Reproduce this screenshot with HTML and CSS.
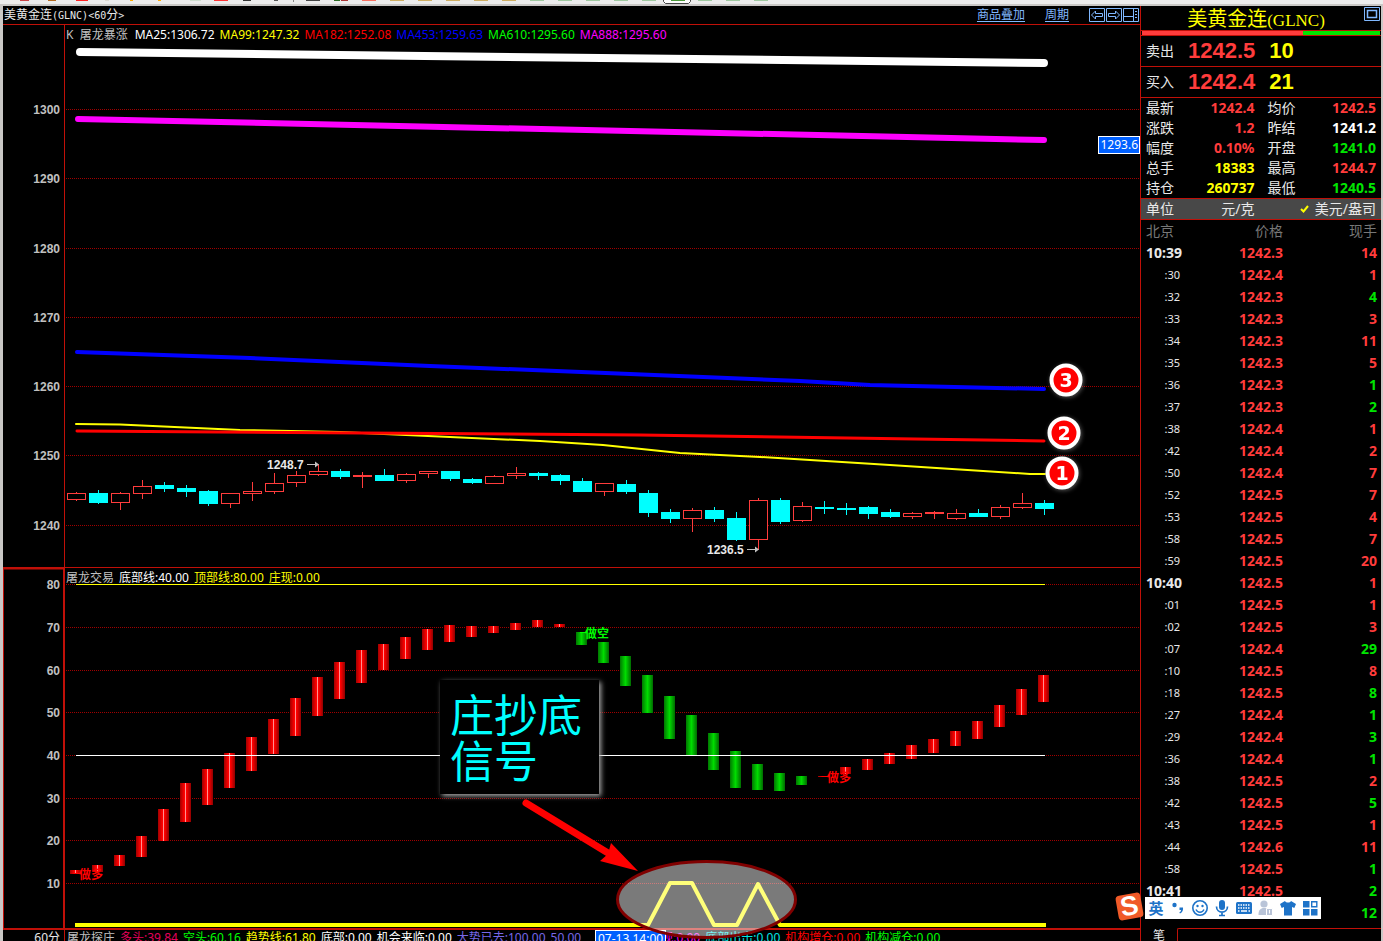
FILE: index.html
```html
<!DOCTYPE html>
<html lang="zh-CN">
<head>
<meta charset="utf-8">
<title>美黄金连(GLNC)</title>
<link rel="stylesheet" href="styles.css">
</head>
<body>
<div class="app">
  <div class="toolbar" aria-hidden="true">
    <svg class="toolbar-icons" width="800" height="4">
      <g id="toolbar-marks"></g>
      <path d="M663.500 0v1.500l2 2h23l2-2V0" fill="#fff" stroke="#444"/>
      <path d="M671 0h14v1h-14z" fill="#4d9a3c"/>
      <path d="M293.500 0v2" stroke="#888"/>
    </svg>
  </div>
  <div class="workspace">
    <main class="charts">
      <header class="title-row">
        <h1 class="chart-title">美黄金连<span class="mono">(GLNC)&lt;60</span>分<span class="mono">&gt;</span></h1>
        <nav class="chart-nav">
          <a href="#overlay">商品叠加</a>
          <a href="#period">周期</a>
          <span class="window-buttons">
            <button type="button" class="win-btn" aria-label="向左"><svg width="16" height="14"><path d="M.5.500h15v13H.5zM2.500 7l4-4v2.500h7v3h-7V11z"/></svg></button>
            <button type="button" class="win-btn" aria-label="向右"><svg width="16" height="14"><path d="M.5.500h15v13H.5zM13.500 7l-4-4v2.500h-7v3h7V11z"/></svg></button>
            <button type="button" class="win-btn" aria-label="布局"><svg width="16" height="14"><path d="M.5.500h15v13H.5zM10.500.500v13M.5 8.500h10M12 3.500h2M12 6.500h2M12 9.500h2"/></svg></button>
          </span>
        </nav>
      </header>

      <section class="panel price-panel">
        <svg class="plot" id="price-plot" viewBox="3 25 1137 542" preserveAspectRatio="none"></svg>
        <div class="legend">
          <span class="grey name">K&nbsp; 屠龙暴涨</span>
          <span class="white">MA25:1306.72</span>
          <span class="yellow">MA99:1247.32</span>
          <span class="red">MA182:1252.08</span>
          <span class="blue">MA453:1259.63</span>
          <span class="lime">MA610:1295.60</span>
          <span class="magenta">MA888:1295.60</span>
        </div>
        <output class="price-tag">1293.6</output>
      </section>

      <section class="panel signal-panel">
        <svg class="plot" id="signal-plot" viewBox="3 568 1137 360" preserveAspectRatio="none">
          <defs>
            <linearGradient id="bar-red"><stop offset="0" stop-color="#a00000"/><stop offset=".4" stop-color="#ff0000"/><stop offset=".6" stop-color="#ff0000"/><stop offset="1" stop-color="#900000"/></linearGradient>
            <linearGradient id="bar-green"><stop offset="0" stop-color="#007800"/><stop offset=".5" stop-color="#00dc00"/><stop offset="1" stop-color="#006c00"/></linearGradient>
          </defs>
        </svg>
        <div class="legend">
          <span class="grey">屠龙交易</span>
          <span class="white">底部线:40.00</span>
          <span class="yellow">顶部线:80.00</span>
          <span class="yellow">庄现:0.00</span>
        </div>
      </section>

      <section class="strip">
        <span class="strip-period">60分</span>
        <div class="strip-legend">
          <span class="grey">屠龙探庄</span>
          <span class="crimson">多头:39.84</span>
          <span class="lime">空头:60.16</span>
          <span class="yellow">趋势线:61.80</span>
          <span class="white">底部:0.00</span>
          <span class="white">机会来临:0.00</span>
          <span class="violet">大势已去:100.00</span>
          <span class="violet">50.00</span>
          <span class="magenta after-tag">现:0.00</span>
          <span class="cyan">底部出击:0.00</span>
          <span class="red">机构增仓:0.00</span>
          <span class="lime">机构减仓:0.00</span>
        </div>
        <output class="date-tag">07-13 14:00</output>
      </section>

      <p class="callout">庄抄底<br>信号</p>
      <svg class="annotations" viewBox="3 6 1137 935" preserveAspectRatio="none">
        <defs>
          <filter id="soft" x="-30%" y="-30%" width="160%" height="160%"><feDropShadow dx="1" dy="1" stdDeviation="2" flood-color="#aaa" flood-opacity=".5"/></filter>
        </defs>
        <ellipse cx="706.500" cy="899.500" rx="89" ry="38" fill="#fff" fill-opacity=".48" stroke="#800000" stroke-width="3"/>
        <path d="M526 803L608 853" stroke="#f00" stroke-width="7" stroke-linecap="round"/>
        <path d="M638 871L600 861L608 854L611 843Z" fill="#f00"/>
        <g class="badge" filter="url(#soft)">
          <circle cx="1066" cy="380" r="14.500"/><text x="1066" y="387">3</text>
          <circle cx="1064" cy="433" r="14.500"/><text x="1064" y="440">2</text>
          <circle cx="1062" cy="473" r="14.500"/><text x="1062" y="480">1</text>
        </g>
      </svg>
    </main>

    <aside class="quote">
      <header class="quote-head">
        <h2 class="quote-name">美黄金连<span class="code">(GLNC)</span></h2>
        <button type="button" class="win-btn quote-max" aria-label="最大化"><svg width="16" height="14"><path d="M.5.500h15v13H.5z"/><path d="M3.500 3.500h9v7h-9z" stroke-width="1.500"/></svg></button>
      </header>
      <div class="ratio"><span class="ratio-sell"></span><span class="ratio-buy"></span></div>
      <div class="order"><span class="label">卖出</span><strong class="up">1242.5</strong><strong class="yellow">10</strong></div>
      <div class="order"><span class="label">买入</span><strong class="up">1242.4</strong><strong class="yellow">21</strong></div>
      <div class="stats">
        <div class="stat"><span>最新</span><b class="up">1242.4</b></div><div class="stat"><span>均价</span><b class="up">1242.5</b></div>
        <div class="stat"><span>涨跌</span><b class="up">1.2</b></div><div class="stat"><span>昨结</span><b class="white">1241.2</b></div>
        <div class="stat"><span>幅度</span><b class="up">0.10%</b></div><div class="stat"><span>开盘</span><b class="down">1241.0</b></div>
        <div class="stat"><span>总手</span><b class="yellow">18383</b></div><div class="stat"><span>最高</span><b class="up">1244.7</b></div>
        <div class="stat"><span>持仓</span><b class="yellow">260737</b></div><div class="stat"><span>最低</span><b class="down">1240.5</b></div>
      </div>
      <div class="units">
        <div class="stat"><span>单位</span><button type="button" class="unit-btn">元/克</button></div>
        <button type="button" class="unit-btn selected"><svg width="9" height="8"><path d="M1 4l2.500 2.500L8 1" fill="none" stroke="#ff0" stroke-width="2"/></svg>美元/盎司</button>
      </div>
      <table class="tape">
        <colgroup><col class="col-time"><col class="col-price"><col></colgroup>
        <thead><tr><th scope="col">北京</th><th scope="col">价格</th><th scope="col">现手</th></tr></thead>
        <tbody id="tape-body"></tbody>
      </table>
      <div class="quote-tabs"><button type="button" class="tab">笔</button><div class="tab-rest"></div></div>
    </aside>
  </div>
</div>

<div class="ime">
  <div class="ime-logo"><span>S</span></div>
  <button type="button" class="ime-lang">英</button>
  <button type="button" aria-label="标点"><svg width="18" height="18"><circle cx="5.500" cy="6" r="2.200"/><path d="M10.500 8.500h3.500c.4 2.500-.5 5-3 6l-.7-1c1.200-.6 1.700-1.500 1.700-2.500h-1.500z"/></svg></button>
  <button type="button" aria-label="表情"><svg width="18" height="18"><circle cx="9" cy="9" r="7.200" fill="none" stroke="#1e73c8" stroke-width="1.600"/><circle cx="6.500" cy="7" r="1.200"/><circle cx="11.500" cy="7" r="1.200"/><path d="M5 10.500c1.500 3.500 6.500 3.500 8 0" fill="none" stroke="#1e73c8" stroke-width="1.500"/></svg></button>
  <button type="button" aria-label="语音"><svg width="18" height="18"><rect x="6" y="1" width="6" height="10" rx="3"/><path d="M3.500 7.500c0 7.500 11 7.500 11 0M9 13v3M6 16.500h6" fill="none" stroke="#1e73c8" stroke-width="1.700"/></svg></button>
  <button type="button" aria-label="键盘"><svg width="18" height="18"><rect x="1" y="3" width="16" height="12" rx="1.500"/><path d="M3 6h12M3 9h12" stroke="#fff" stroke-width="1.500" stroke-dasharray="1.500 1"/><path d="M3 12h1.500M6 12h6M13.500 12H15" stroke="#fff" stroke-width="1.500"/></svg></button>
  <button type="button" aria-label="账户"><svg width="18" height="18"><g fill="#b9c4d8"><circle cx="7" cy="5" r="3.600"/><path d="M1.500 16c0-5 2-7 5.500-7s4 1 4.500 2H9v5z"/><path d="M9.500 9.500h6v7h-6z" stroke="#fff"/></g><path d="M12.500 11v3.500" stroke="#fff"/></svg></button>
  <button type="button" aria-label="皮肤"><svg width="18" height="18"><path d="M6 2c1 2 5 2 6 0l5 3-1.700 4-2.300-1v8.500H5V8L2.700 9 1 5z"/></svg></button>
  <button type="button" aria-label="工具箱"><svg width="18" height="18"><path d="M2 2h6.500v6.500H2zM2 10h6.500v6.500H2zM10 10h6.500v6.500H10z"/><path d="M10.700 2.700h5.100v5.100h-5.100z" fill="none" stroke="#1e73c8" stroke-width="1.400"/></svg></button>
</div>
<script src="app.js"></script>
</body>
</html>
```
FILE: styles.css
```css
* { box-sizing: border-box; }

body {
  margin: 0;
  background: #000;
  color: #e8e8e8;
  font: 12px/16px "Noto Sans", "Noto Sans CJK SC", sans-serif;
}

h1, h2, p { margin: 0; font-weight: 400; }

button {
  padding: 0;
  border: 0;
  background: none;
  color: inherit;
  font: inherit;
}

.white { color: #fff; }
.grey { color: #c0c0c0; }
.yellow { color: #ff0; }
.red { color: #f00; }
.blue { color: #00f; }
.lime { color: #0f0; }
.magenta { color: #f0f; }
.cyan { color: #00e6e6; }
.crimson { color: #e6005c; }
.violet { color: #7868e8; }
.up { color: #ff3c3c; }
.down { color: #00e600; }

.app {
  display: flex;
  flex-direction: column;
  height: 100vh;
  overflow: hidden;
}

.toolbar {
  flex: none;
  height: 6px;
  background: #ececec;
  border-bottom: 2px solid #cac8c6;
}
.toolbar-icons { display: block; }

.workspace {
  flex: 1;
  min-height: 0;
  display: grid;
  grid-template-columns: minmax(0, 1fr) 241px;
  border-left: 3px solid #cac8c6;
  border-right: 2px solid #cac8c6;
}

/* Charts */
.charts {
  position: relative;
  display: grid;
  grid-template-rows: 19px minmax(0, 543fr) minmax(0, 362fr) 11px;
  min-width: 0;
  overflow: hidden;
}

.title-row {
  display: flex;
  justify-content: space-between;
  align-items: center;
  border-bottom: 1px solid #c01008;
}
.chart-title { padding-left: 1px; font-size: 12px; }
.mono { font: 10px "DejaVu Sans Mono", monospace; }
.chart-nav { display: flex; align-items: center; gap: 20px; }
.chart-nav a { color: #80b8ff; text-underline-offset: 2px; }
.window-buttons { display: flex; gap: 1px; padding-right: 1px; }
.win-btn { display: block; height: 14px; }
.win-btn svg { display: block; fill: none; stroke: #80b8ff; }

.panel { position: relative; min-height: 0; }
.price-panel { border-bottom: 1px solid #c01008; }
.signal-panel { border-bottom: 2px solid #c01008; }
.plot { display: block; width: 100%; height: 100%; }

.legend {
  position: absolute;
  top: 2px;
  left: 63px;
  display: flex;
  gap: 5px;
  white-space: nowrap;
}
.legend .name { margin-right: 2px; }

.price-tag {
  position: absolute;
  top: 111px;
  right: 0;
  padding: 0 1px;
  border: 1px solid #fff;
  background: #0060ff;
  color: #fff;
}

.grid-line { stroke: #a00000; stroke-dasharray: 1 1; }
.frame { stroke: #c01008; }
.axis-label {
  fill: #c0c0c0;
  font: bold 12px "Liberation Sans", sans-serif;
  text-anchor: end;
}
.point-label { fill: #e8e8e8; font: bold 12px "Liberation Sans", sans-serif; }
.signal-label { font: bold 12px "Noto Sans CJK SC", sans-serif; }
.candle-up { fill: #000; stroke: #ff3c3c; }
.candle-down { fill: #0ff; stroke: #0ff; }
.series { fill: none; stroke-linejoin: round; }

.strip {
  position: relative;
  display: grid;
  grid-template-columns: 62px 1fr;
  min-height: 0;
  white-space: nowrap;
}
.strip-period { padding-right: 4px; border-right: 1px solid #c01008; text-align: right; }
.strip-legend { display: flex; gap: 5px; padding-left: 2px; }
.after-tag { margin-left: 75px; }
.date-tag {
  position: absolute;
  top: 0;
  left: 592px;
  padding: 0 2px;
  border: 1px solid #fff;
  background: #0060ff;
  color: #fff;
}

.callout {
  position: absolute;
  top: 674px;
  left: 437px;
  padding: 10px 17px 12px 10px;
  background: #000;
  box-shadow: 2px 2px 5px #aaa;
  color: #0ff;
  font: 44px/46px "Noto Sans CJK SC", sans-serif;
}
.annotations {
  position: absolute;
  inset: 0;
  width: 100%;
  height: 100%;
  pointer-events: none;
}
.badge circle { fill: #f00; stroke: #fff; stroke-width: 4px; }
.badge text {
  fill: #fff;
  font: bold 19px "DejaVu Sans", sans-serif;
  text-anchor: middle;
}

/* Quote column */
.quote {
  display: flex;
  flex-direction: column;
  min-height: 0;
  overflow: hidden;
  border-left: 1px solid #c01008;
  font-size: 14px;
  line-height: 20px;
}
.quote-head {
  position: relative;
  display: flex;
  flex: none;
  justify-content: center;
  height: 25px;
  padding-right: 10px;
  border-bottom: 1px solid #c01008;
}
.quote-name { color: #ff0; font: 20px/24px "Noto Sans CJK SC", sans-serif; }
.code { font: 17px "Liberation Serif", serif; }
.quote-max { position: absolute; top: 1px; right: 1px; }

.ratio { display: flex; flex: none; height: 5px; padding: 0 1px; border-bottom: 1px solid #c01008; }
.ratio-sell { flex: 161; background: #ff3c3c; }
.ratio-buy { flex: 77; background: #00e600; }

.order {
  display: flex;
  flex: none;
  align-items: center;
  gap: 14px;
  height: 31px;
  padding-left: 5px;
  border-bottom: 1px solid #c01008;
}
.order strong { font: bold 22px "Liberation Sans", sans-serif; }

.stats, .units {
  display: grid;
  flex: none;
  grid-template-columns: 1fr 1fr;
  column-gap: 13px;
  padding: 0 5px;
  border-bottom: 1px solid #c01008;
}
.stat { display: flex; justify-content: space-between; }
.units { background: #484848; }
.unit-btn { display: block; }
.unit-btn.selected { display: flex; align-items: center; justify-content: flex-end; gap: 6px; white-space: nowrap; }

.tape {
  flex: none;
  width: 100%;
  border-collapse: collapse;
  table-layout: fixed;
  text-align: right;
}
.col-time { width: 41px; }
.col-price { width: 101px; }
.tape th, .tape td { height: 22px; padding: 0; white-space: nowrap; }
.tape th { color: #777; font-weight: 400; }
.tape td { font-weight: 700; }
.tape th:last-child, .tape td:last-child { padding-right: 4px; }
.tape th:first-child, .tape td.hour { padding-left: 5px; text-align: left; }
.tape td.second { padding-right: 2px; font-size: 11px; font-weight: 400; }

.quote-tabs { display: flex; flex: none; padding-top: 4px; line-height: 16px; }
.tab { width: 36px; font-size: 12px; }
.tab-rest {
  flex: 1;
  height: 16px;
  border: 1px solid #c01008;
  border-width: 1px 0 0 1px;
  border-top-left-radius: 2px;
}

/* Input method bar floats over the window */
.ime {
  position: absolute;
  right: 62px;
  bottom: 22px;
  display: flex;
  height: 22px;
  background: #fff;
}
.ime button {
  display: grid;
  place-items: center;
  width: 22px;
  color: #1e73c8;
  fill: #1e73c8;
}
.ime .ime-lang { font: bold 15px/22px "Noto Sans CJK SC", sans-serif; }
.ime-logo {
  position: absolute;
  right: 179px;
  bottom: 0;
  display: grid;
  place-items: center;
  width: 25px;
  height: 25px;
  border-radius: 4px;
  background: #f05a28;
  color: #fff;
  font: bold 27px/25px "Liberation Sans", sans-serif;
  transform: rotate(-10deg);
}
```
FILE: app.js
```js
const SVG = 'http://www.w3.org/2000/svg';
const STEP = 22;

function add(parent, tag, attrs, text) {
  const node = document.createElementNS(SVG, tag);
  for (const key in attrs) node.setAttribute(key, attrs[key]);
  if (text) node.textContent = text;
  parent.appendChild(node);
  return node;
}

function gridLines(svg, rows) {
  for (const [y, label] of rows) {
    add(svg, 'path', { d: `M66 ${y + 0.5}H1140`, class: 'grid-line' });
    add(svg, 'text', { x: 60, y: y + 5, class: 'axis-label' }, label);
  }
}

function series(svg, points, color, width, cap) {
  add(svg, 'polyline', { points, class: 'series', stroke: color, 'stroke-width': width, 'stroke-linecap': cap || 'round' });
}

/* Price panel */
const price = document.getElementById('price-plot');
add(price, 'path', { d: 'M64.5 25V567', class: 'frame' });
gridLines(price, [[109, '1300'], [178, '1290'], [248, '1280'], [317, '1270'], [386, '1260'], [455, '1250'], [525, '1240']]);

/* direction, high, body top, body bottom, low */
const candles = [
  ['u', 492, 493, 500, 501], ['d', 490, 493, 503, 504], ['u', 492, 493, 503, 510], ['u', 480, 486, 494, 499],
  ['d', 482, 485, 489, 492], ['d', 485, 488, 492, 497], ['d', 490, 491, 504, 506], ['u', 493, 493, 504, 508],
  ['u', 482, 491, 494, 501], ['u', 473, 483, 492, 494], ['u', 471, 475, 483, 487], ['u', 464, 471, 475, 476],
  ['d', 469, 471, 477, 479], ['u', 472, 475, 477, 488], ['d', 469, 475, 481, 481], ['u', 473, 474, 481, 483],
  ['u', 471, 471, 474, 478], ['d', 471, 471, 479, 481], ['d', 478, 479, 483, 484], ['u', 475, 476, 484, 484],
  ['u', 467, 473, 476, 479], ['d', 472, 473, 476, 480], ['d', 474, 475, 481, 485], ['d', 478, 481, 492, 492],
  ['u', 483, 483, 492, 496], ['d', 480, 484, 492, 494], ['d', 490, 493, 513, 517], ['d', 509, 512, 519, 523],
  ['u', 508, 510, 519, 532], ['d', 507, 510, 519, 522], ['d', 512, 518, 540, 541], ['u', 498, 500, 540, 550],
  ['d', 498, 500, 522, 524], ['u', 502, 506, 521, 522], ['d', 501, 507, 509, 514], ['d', 503, 508, 510, 515],
  ['d', 506, 507, 514, 519], ['d', 509, 512, 517, 518], ['u', 512, 513, 517, 519], ['u', 511, 512, 514, 519],
  ['u', 509, 513, 519, 520], ['d', 509, 513, 517, 517], ['u', 505, 507, 517, 519], ['u', 493, 503, 508, 509],
  ['d', 500, 503, 509, 515]
];
candles.forEach(([dir, high, top, bottom, low], i) => {
  const cx = 76.5 + i * STEP;
  const g = add(price, 'g', { class: dir === 'u' ? 'candle-up' : 'candle-down' });
  add(g, 'path', { d: `M${cx} ${high}V${low}` });
  add(g, 'rect', { x: cx - 9, y: top + 0.5, width: 18, height: bottom - top - 1 });
});

series(price, '80,52 1044,63', '#fff', 8);
series(price, '78,119 1044,140', '#f0f', 6);
series(price, '77,352 250,358 430,366 630,374 800,381 870,385 1044,389', '#00f', 4);
series(price, '76,424 120,424.5 240,430 340,432 450,437 540,441 603,445 680,453 760,457 890,465 1030,474 1045,474', '#ff0', 2);
series(price, '77,431 640,435 1044,441', '#f00', 3);

for (const [x, y, label] of [[267, 464, '1248.7'], [707, 549, '1236.5']]) {
  add(price, 'text', { x, y: y + 5, class: 'point-label' }, label);
  add(price, 'path', { d: `M${x + 40} ${y + 0.5}h10`, stroke: '#c0c0c0' });
  add(price, 'path', { d: `M${x + 48} ${y - 2.5}l4 3l-4 3z`, fill: '#c0c0c0' });
}

/* Signal panel */
const signal = document.getElementById('signal-plot');
add(signal, 'path', { d: 'M3.500 568V928', class: 'frame' });
add(signal, 'path', { d: 'M64 568V928M3 568.5H65', class: 'frame', 'stroke-width': 2 });
gridLines(signal, [[584, '80'], [627, '70'], [670, '60'], [712, '50'], [755, '40'], [798, '30'], [840, '20'], [883, '10']]);

const bars = [
  [870, 874], [865, 872], [855, 866], [836, 857], [809, 841], [783, 822], [769, 805], [753, 788], [737, 771],
  [719, 754], [698, 736], [677, 716], [662, 699], [650, 683], [644, 670], [637, 659], [629, 650], [625, 642],
  [626, 637], [626, 633], [623, 630], [620, 627], [624, 627], [632, 645], [642, 663], [656, 686], [675, 713],
  [696, 739], [715, 755], [733, 770], [751, 788], [764, 790], [773, 791], [776, 785], [776, 777], [767, 774],
  [759, 770], [753, 764], [745, 759], [739, 753], [731, 746], [721, 739], [705, 727], [689, 715], [675, 702]
];
bars.forEach(([top, bottom], i) => {
  const falling = i >= 23 && i <= 33;
  const x = 70 + i * STEP;
  add(signal, 'rect', { x, y: top, width: 11, height: bottom - top, fill: falling ? 'url(#bar-green)' : 'url(#bar-red)' });
  if (!falling) add(signal, 'path', { d: `M${x + 5.5} ${top}V${bottom}`, stroke: '#ff9090' });
});

add(signal, 'path', { d: 'M76 584.5H1045', stroke: '#ff0' });
add(signal, 'path', { d: 'M76 755.5H1045', stroke: '#fff' });
series(signal, '75,925 648,925 670,883 692,883 714,925 737,925 758,884 780,925 1046,925', '#ff0', 4, 'butt');

for (const [x, y, label, color] of [[79, 879, '做多', '#f00'], [585, 638, '做空', '#0f0'], [827, 782, '做多', '#f00']]) {
  add(signal, 'text', { x, y, fill: color, class: 'signal-label' }, label);
  add(signal, 'path', { d: `M${x - 5} ${y - 5.5}h6`, stroke: color });
}

/* Toolbar icon bottoms */
const marks = [
  [20, 9, '#c44'], [48, 8, '#b4691e'], [76, 12, '#f22'], [105, 4, '#dcd8d0'], [130, 3, '#fa0'], [158, 3, '#fa0'],
  [190, 11, '#cddccd'], [214, 14, '#f33'], [243, 8, '#333'], [274, 4, '#555'], [306, 14, '#444'], [334, 6, '#2a6a20'],
  [341, 7, '#a33'], [362, 14, '#f87060'], [390, 14, '#cfae62'], [418, 14, '#cfae62'], [446, 14, '#cfae62'],
  [474, 14, '#cfae62'], [502, 14, '#cfae62'], [530, 14, '#9fc8a0'], [558, 14, '#9fc8a0'], [586, 14, '#9fc8a0'],
  [614, 14, '#9fc8a0'], [642, 14, '#9fc8a0'], [698, 14, '#9fc8a0'], [726, 14, '#9fc8a0'], [754, 14, '#9fc8a0']
];
for (const [x, width, fill] of marks) add(document.getElementById('toolbar-marks'), 'rect', { x, y: 0, width, height: 1, fill });

/* Trade tape: time, price, size, direction */
const trades = [
  ['10:39', '1242.3', 14, 'up'], [':30', '1242.4', 1, 'up'], [':32', '1242.3', 4, 'down'], [':33', '1242.3', 3, 'up'],
  [':34', '1242.3', 11, 'up'], [':35', '1242.3', 5, 'up'], [':36', '1242.3', 1, 'down'], [':37', '1242.3', 2, 'down'],
  [':38', '1242.4', 1, 'up'], [':42', '1242.4', 2, 'up'], [':50', '1242.4', 7, 'up'], [':52', '1242.5', 7, 'up'],
  [':53', '1242.5', 4, 'up'], [':58', '1242.5', 7, 'up'], [':59', '1242.5', 20, 'up'], ['10:40', '1242.5', 1, 'up'],
  [':01', '1242.5', 1, 'up'], [':02', '1242.5', 3, 'up'], [':07', '1242.4', 29, 'down'], [':10', '1242.5', 8, 'up'],
  [':18', '1242.5', 8, 'down'], [':27', '1242.4', 1, 'down'], [':29', '1242.4', 3, 'down'], [':36', '1242.4', 1, 'down'],
  [':38', '1242.5', 2, 'up'], [':42', '1242.5', 5, 'down'], [':43', '1242.5', 1, 'up'], [':44', '1242.6', 11, 'up'],
  [':58', '1242.5', 1, 'down'], ['10:41', '1242.5', 2, 'down'], ['', '', 12, 'down']
];
const body = document.getElementById('tape-body');
for (const [time, value, size, dir] of trades) {
  const row = body.insertRow();
  const cells = [[time, time.length > 3 ? 'hour' : 'second'], [value, 'up'], [size, dir]];
  for (const [text, cls] of cells) {
    const cell = row.insertCell();
    cell.textContent = text;
    cell.className = cls;
  }
}
```
